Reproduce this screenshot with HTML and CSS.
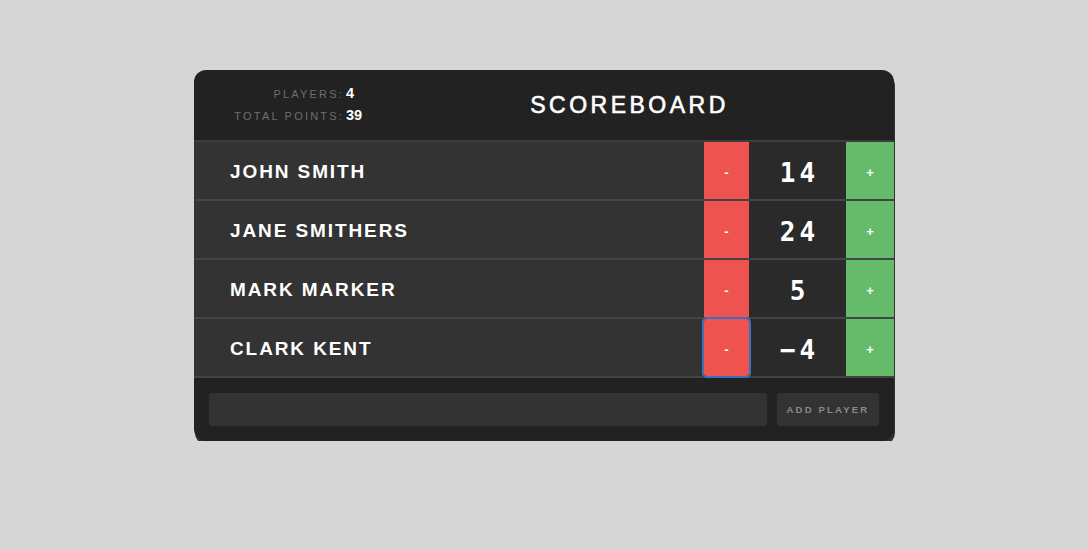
FILE: index.html
```html
<!DOCTYPE html>
<html>
<head>
<meta charset="utf-8">
<link rel="stylesheet" href="styles.css">
</head>
<body>
<div class="page">
  <div class="board">
    <div class="header">
      <div class="stats">
        <div class="stat"><span class="label">PLAYERS:</span><span class="value">4</span></div>
        <div class="stat"><span class="label">TOTAL POINTS:</span><span class="value">39</span></div>
      </div>
      <h1 class="title">SCOREBOARD</h1>
    </div>
    <div class="players">
      <div class="player">
        <div class="name">JOHN SMITH</div>
        <div class="counter"><button class="btn minus">-</button><div class="score">14</div><button class="btn plus">+</button></div>
      </div>
      <div class="player">
        <div class="name">JANE SMITHERS</div>
        <div class="counter"><button class="btn minus">-</button><div class="score">24</div><button class="btn plus">+</button></div>
      </div>
      <div class="player">
        <div class="name">MARK MARKER</div>
        <div class="counter"><button class="btn minus">-</button><div class="score">5</div><button class="btn plus">+</button></div>
      </div>
      <div class="player">
        <div class="name">CLARK KENT</div>
        <div class="counter"><button class="btn minus focused">-</button><div class="score">−4</div><button class="btn plus">+</button></div>
      </div>
    </div>
    <form class="add-form">
      <input class="add-input" type="text">
      <button class="add-btn" type="button">ADD PLAYER</button>
    </form>
  </div>
</div>
</body>
</html>
```

FILE: styles.css
```css
html, body {
  margin: 0;
  padding: 0;
  background: #d6d6d6;
  font-family: "Liberation Sans", Arial, sans-serif;
}
.page {
  padding-top: 70px;
  display: flex;
  justify-content: center;
}
.board {
  width: 700px;
  background: #222;
  border-radius: 12px;
  box-shadow: 1px 4px 0 #333;
}
.header {
  display: flex;
  align-items: center;
  height: 70px;
  border-bottom: 2px solid #3d3d3d;
}
.stats {
  width: 171px;
  display: flex;
  flex-direction: column;
  align-items: flex-end;
  gap: 6px;
  margin-top: -3px;
}
.stat {
  display: flex;
  align-items: baseline;
}
.label {
  font-size: 11px;
  letter-spacing: 2.2px;
  color: #6e6e6e;
  margin-right: 2px;
}
.value {
  font-size: 14.5px;
  font-weight: bold;
  color: #fff;
  width: 19px;
}
.title {
  flex: 1;
  margin: 0;
  text-align: center;
  color: #fff;
  font-size: 23px;
  font-weight: normal;
  letter-spacing: 3.5px;
  -webkit-text-stroke: 0.6px #fff;
}
.player {
  display: flex;
  align-items: stretch;
  height: 57px;
  background: #333;
  border-bottom: 2px solid #444;
}
.name {
  flex: 1;
  display: flex;
  align-items: center;
  padding-left: 36px;
  padding-top: 3px;
  color: #fff;
  font-size: 19px;
  font-weight: bold;
  letter-spacing: 1.9px;
}
.counter {
  display: flex;
  align-items: stretch;
}
.btn {
  border: none;
  margin: 0;
  padding: 3px 0 0 0;
  color: #fff;
  font-family: "Liberation Sans", Arial, sans-serif;
  font-size: 13px;
  font-weight: bold;
}
.minus {
  width: 45px;
  background: #ef5350;
}
.plus {
  width: 48px;
  background: #66bb6a;
}
.focused {
  position: relative;
  z-index: 1;
  outline: 2px solid #3b72bb;
  outline-offset: 0;
  border-radius: 3px;
}
.score {
  width: 97px;
  background: #2a2a2a;
  color: #fff;
  display: flex;
  align-items: center;
  justify-content: center;
  font-family: "DejaVu Sans Mono", "Liberation Mono", monospace;
  font-weight: bold;
  font-size: 26px;
  letter-spacing: 4px;
  padding-left: 4px;
  padding-top: 4px;
  box-sizing: border-box;
}
.add-form {
  display: flex;
  gap: 10px;
  padding: 15px 15px 15px 15px;
  margin: 0;
}
.add-input {
  flex: 1;
  height: 33px;
  box-sizing: border-box;
  background: #333;
  border: none;
  border-radius: 4px;
  color: #fff;
  margin: 0;
}
.add-btn {
  width: 102px;
  height: 33px;
  background: #333;
  border: none;
  border-radius: 4px;
  color: #8a8a8a;
  font-family: "Liberation Sans", Arial, sans-serif;
  font-size: 9.5px;
  font-weight: bold;
  letter-spacing: 2.2px;
  padding: 0;
}
```
